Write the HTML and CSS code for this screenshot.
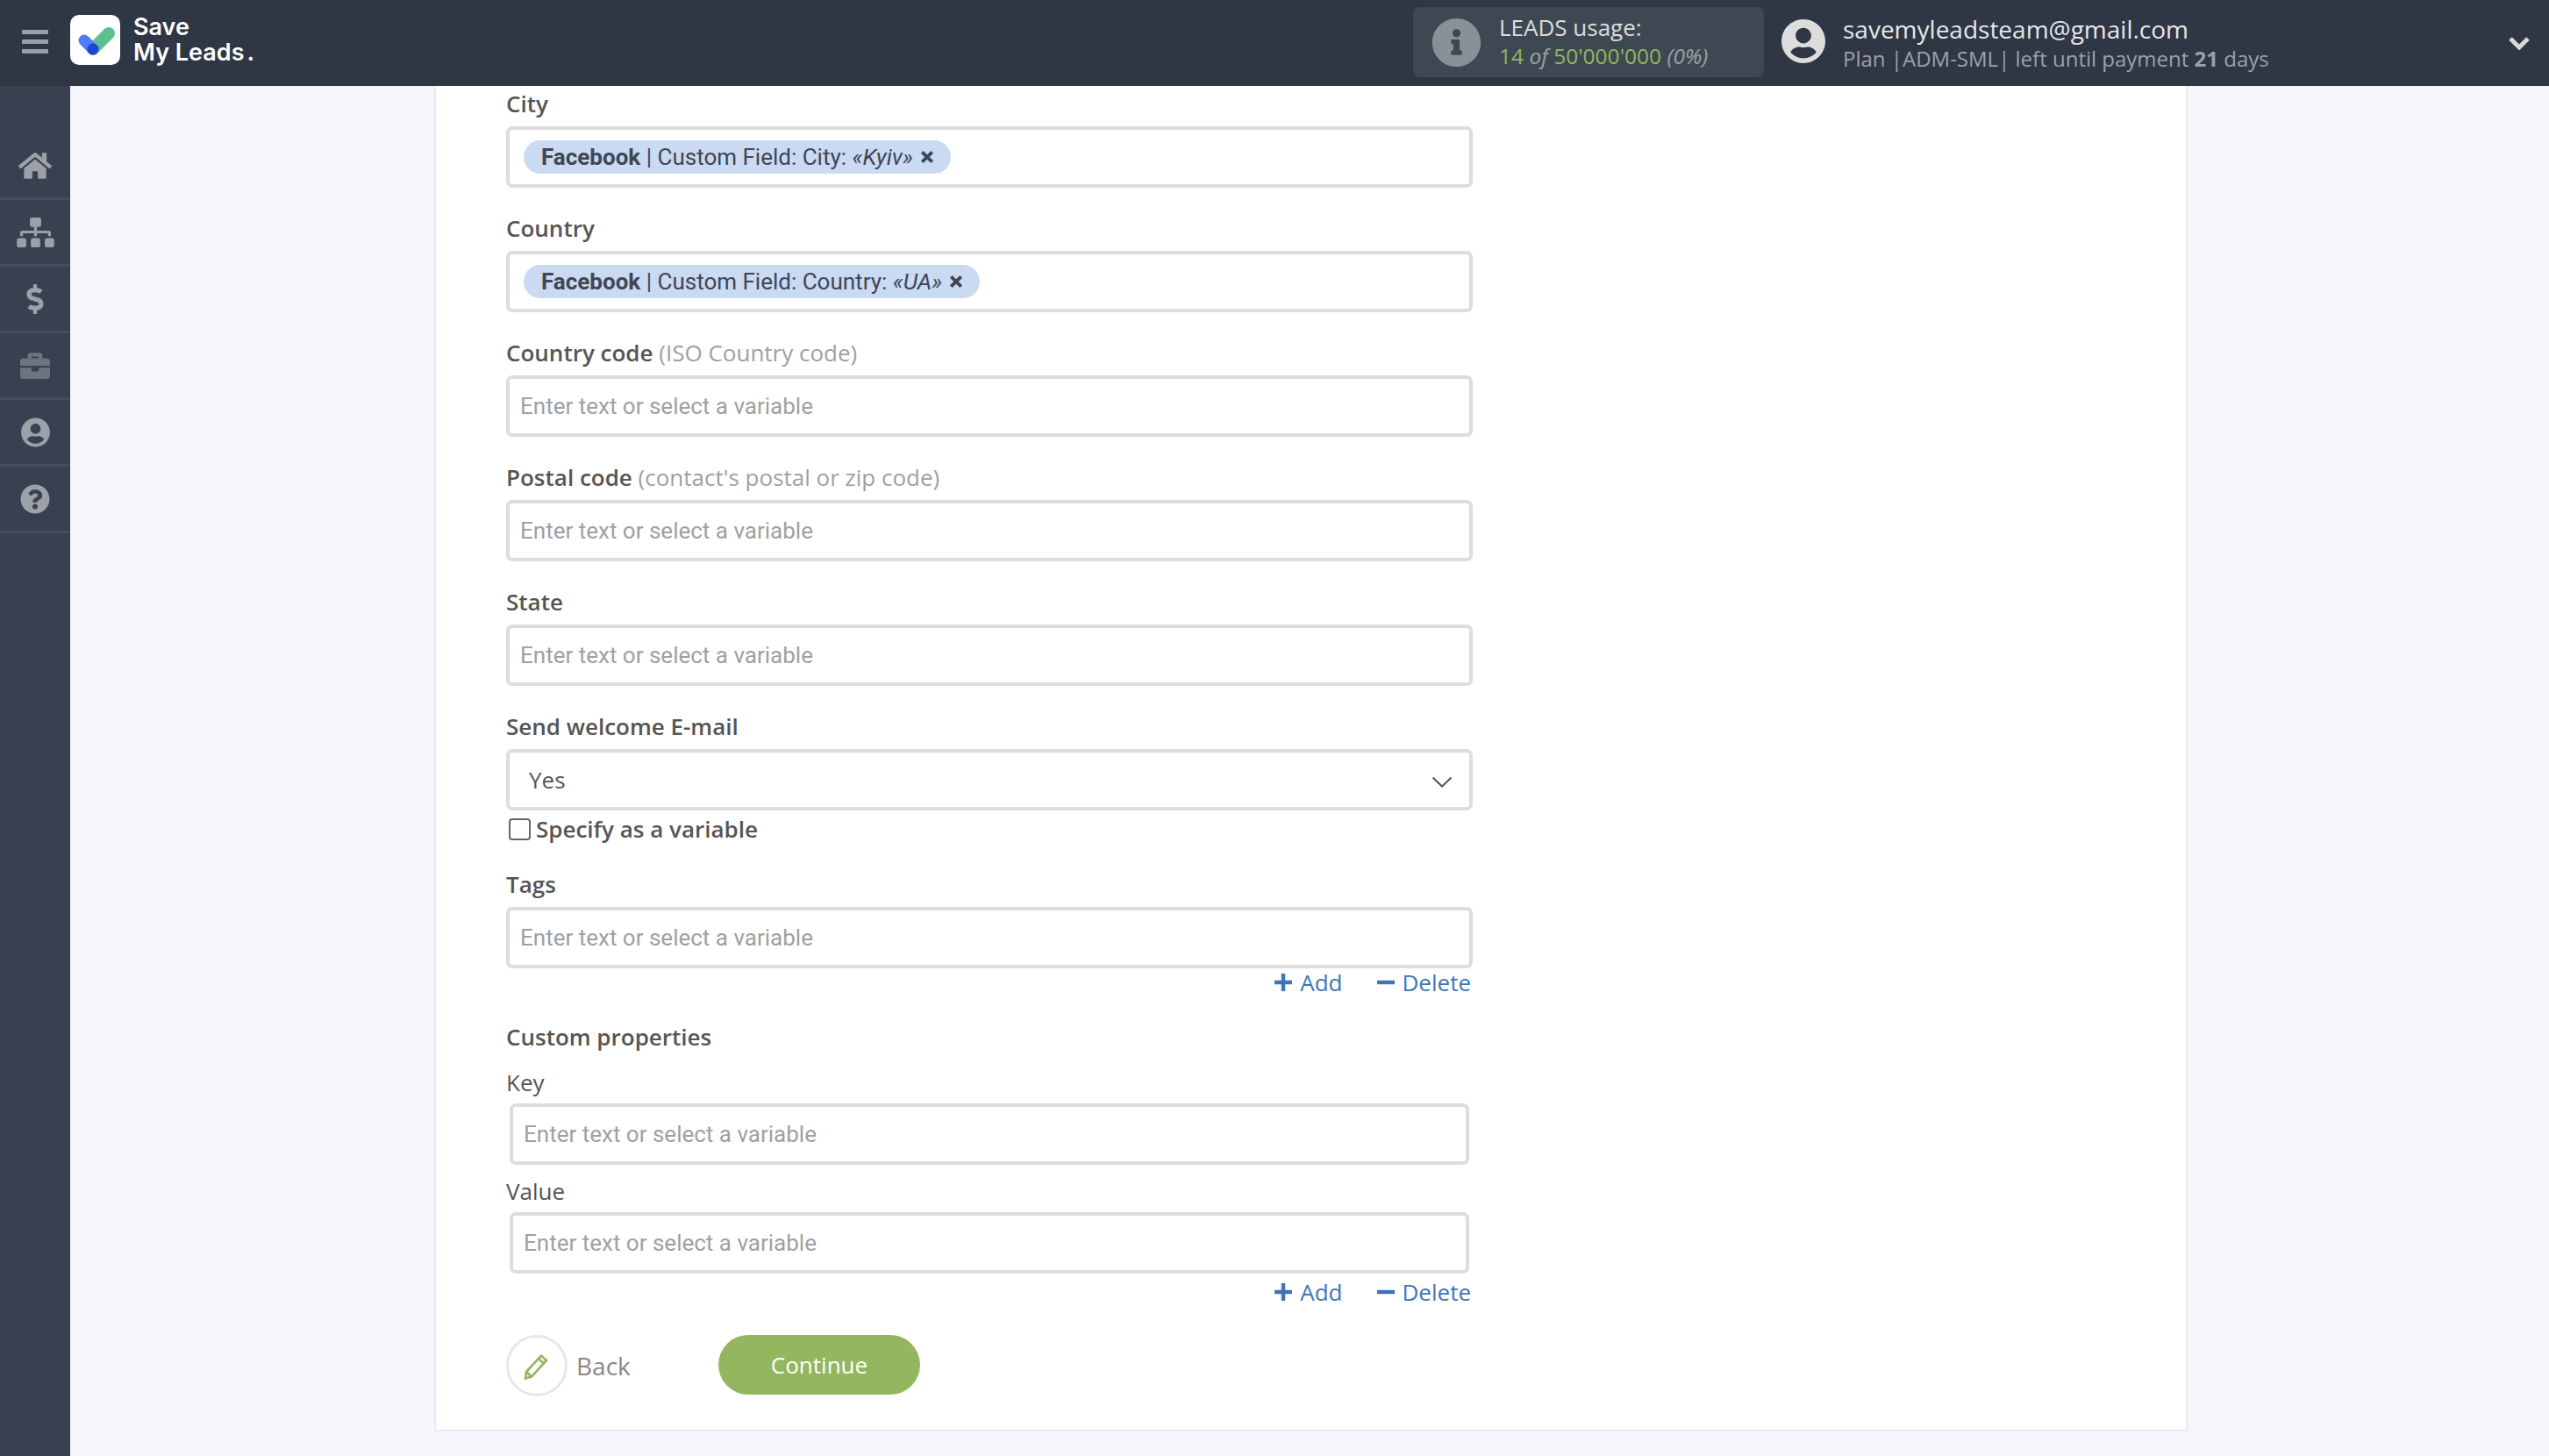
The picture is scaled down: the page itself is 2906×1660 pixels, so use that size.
FILE: index.html
```html
<!DOCTYPE html>
<html lang="en">
<head>
    <meta charset="UTF-8">
    <meta name="viewport" content="width=device-width, initial-scale=1.0">
    <title>Save My Leads</title>
    <link rel="stylesheet" href="styles.css">
</head>
<body>
    <!-- Top bar -->
    <header class="topbar">
        <div class="burger"><span></span><span></span><span></span></div>
        <div class="logo-box">
            <svg viewBox="0 0 57 57" width="57" height="57">
                <line x1="44" y1="21" x2="26" y2="39" stroke="#5ec08f" stroke-width="14" stroke-linecap="round"/>
                <line x1="16" y1="29" x2="26" y2="39" stroke="#4f7cf7" stroke-width="13" stroke-linecap="round"/>
                <circle cx="26" cy="39" r="6.5" fill="#2541d4"/>
            </svg>
        </div>
        <div class="logo-text">Save<br>My Leads<span class="logo-dot">.</span></div>

        <div class="usage">
            <svg class="usage-icon" viewBox="0 0 512 512"><path d="M256 8C119.043 8 8 119.083 8 256c0 136.997 111.043 248 248 248s248-111.003 248-248C504 119.083 392.957 8 256 8zm0 110c23.196 0 42 18.804 42 42s-18.804 42-42 42-42-18.804-42-42 18.804-42 42-42zm56 254c0 6.627-5.373 12-12 12h-88c-6.627 0-12-5.373-12-12v-24c0-6.627 5.373-12 12-12h12v-64h-12c-6.627 0-12-5.373-12-12v-24c0-6.627 5.373-12 12-12h64c6.627 0 12 5.373 12 12v100h12c6.627 0 12 5.373 12 12v24z"/></svg>
            <div class="usage-text">
                <div class="usage-title">LEADS usage:</div>
                <div class="usage-count"><span class="green">14</span> <i>of</i> <span class="green">50'000'000</span> <i>(0%)</i></div>
            </div>
        </div>

        <svg class="user-icon" viewBox="0 0 496 512"><path d="M248 8C111 8 0 119 0 256s111 248 248 248 248-111 248-248S385 8 248 8zm0 96c48.6 0 88 39.4 88 88s-39.4 88-88 88-88-39.4-88-88 39.4-88 88-88zm0 344c-58.7 0-111.3-26.6-146.5-68.2 18.8-35.4 55.6-59.8 98.5-59.8 2.4 0 4.8.4 7.1 1.1 13 4.2 26.6 6.9 40.9 6.9 14.3 0 28-2.7 40.9-6.9 2.3-.7 4.7-1.1 7.1-1.1 42.9 0 79.7 24.4 98.5 59.8C359.3 421.4 306.7 448 248 448z"/></svg>
        <div class="account">
            <div class="account-mail">savemyleadsteam@gmail.com</div>
            <div class="account-plan">Plan |ADM-SML| left until payment <b>21</b> days</div>
        </div>
        <svg class="account-arrow" viewBox="0 0 26 16"><path d="M3 3l10 10L23 3" fill="none" stroke="#d8d9db" stroke-width="5"/></svg>
    </header>

    <div class="layout">
        <!-- Left menu -->
        <nav class="sidebar">
            <a class="side-item"><svg width="38" height="34" viewBox="0 0 576 512"><path d="M280.37 148.26L96 300.11V464a16 16 0 0 0 16 16l112.06-.29a16 16 0 0 0 15.92-16V368a16 16 0 0 1 16-16h64a16 16 0 0 1 16 16v95.64a16 16 0 0 0 16 16.05L464 480a16 16 0 0 0 16-16V300L295.67 148.26a12.19 12.19 0 0 0-15.3 0zM571.6 251.47L488 182.56V44.05a12 12 0 0 0-12-12h-56a12 12 0 0 0-12 12v72.61L318.47 43a48 48 0 0 0-61 0L4.34 251.47a12 12 0 0 0-1.6 16.9l25.5 31A12 12 0 0 0 45.15 301l235.22-193.74a12.19 12.19 0 0 1 15.3 0L530.9 301a12 12 0 0 0 16.9-1.6l25.5-31a12 12 0 0 0-1.7-16.93z"/></svg></a>
            <a class="side-item"><svg width="43" height="34" viewBox="0 0 640 512"><path d="M128 352H32c-17.67 0-32 14.33-32 32v96c0 17.67 14.33 32 32 32h96c17.67 0 32-14.33 32-32v-96c0-17.67-14.33-32-32-32zm-24-80h192v48h48v-48h192v48h48v-57.59c0-21.17-17.23-38.41-38.41-38.41H344v-64h40c17.67 0 32-14.33 32-32V32c0-17.67-14.33-32-32-32H256c-17.67 0-32 14.33-32 32v96c0 17.67 14.33 32 32 32h40v64H94.41C73.23 224 56 241.23 56 262.41V320h48v-48zm264 80h-96c-17.67 0-32 14.33-32 32v96c0 17.67 14.33 32 32 32h96c17.67 0 32-14.33 32-32v-96c0-17.67-14.33-32-32-32zm240 0h-96c-17.67 0-32 14.33-32 32v96c0 17.67 14.33 32 32 32h96c17.67 0 32-14.33 32-32v-96c0-17.67-14.33-32-32-32z"/></svg></a>
            <a class="side-item"><svg width="20" height="34" viewBox="0 0 288 512"><path d="M209.2 233.4l-108-31.6C88.7 198.2 80 186.5 80 173.5c0-16.3 13.2-29.5 29.5-29.5h66.3c12.2 0 24.2 3.7 34.2 10.5 6.1 4.1 14.3 3.1 19.5-2l34.8-34c7.1-6.9 6.1-18.4-1.8-24.5C238 74.8 207.4 64.1 176 64V16c0-8.8-7.2-16-16-16h-32c-8.8 0-16 7.2-16 16v48h-2.5C45.8 64-5.4 118.7.5 183.6c4.2 46.1 39.4 83.6 83.8 96.6l102.5 30c12.5 3.7 21.2 15.3 21.2 28.3 0 16.3-13.2 29.5-29.5 29.5h-66.3C100 368 88 364.3 78 357.5c-6.1-4.1-14.3-3.1-19.5 2l-34.8 34c-7.1 6.9-6.1 18.4 1.8 24.5 24.5 19.2 55.1 29.9 86.5 30v48c0 8.8 7.2 16 16 16h32c8.8 0 16-7.2 16-16v-48.2c46.6-.9 90.3-28.6 105.7-72.7 21.5-61.6-14.6-124.8-72.5-141.7z"/></svg></a>
            <a class="side-item dim"><svg width="34" height="34" viewBox="0 0 512 512"><path d="M320 336c0 8.84-7.16 16-16 16h-96c-8.84 0-16-7.16-16-16v-48H0v144c0 25.6 22.4 48 48 48h416c25.6 0 48-22.4 48-48V288H320v48zm144-208h-80V80c0-25.6-22.4-48-48-48H176c-25.6 0-48 22.4-48 48v48H48c-25.6 0-48 22.4-48 48v80h512v-80c0-25.6-22.4-48-48-48zm-144 0H192V96h128v32z"/></svg></a>
            <a class="side-item"><svg width="33" height="34" viewBox="0 0 496 512"><path d="M248 8C111 8 0 119 0 256s111 248 248 248 248-111 248-248S385 8 248 8zm0 96c48.6 0 88 39.4 88 88s-39.4 88-88 88-88-39.4-88-88 39.4-88 88-88zm0 344c-58.7 0-111.3-26.6-146.5-68.2 18.8-35.4 55.6-59.8 98.5-59.8 2.4 0 4.8.4 7.1 1.1 13 4.2 26.6 6.9 40.9 6.9 14.3 0 28-2.7 40.9-6.9 2.3-.7 4.7-1.1 7.1-1.1 42.9 0 79.7 24.4 98.5 59.8C359.3 421.4 306.7 448 248 448z"/></svg></a>
            <a class="side-item"><svg width="34" height="34" viewBox="0 0 512 512"><path d="M504 256c0 136.997-111.043 248-248 248S8 392.997 8 256C8 119.083 119.043 8 256 8s248 111.083 248 248zM262.655 90c-54.497 0-89.255 22.957-116.549 63.758-3.536 5.286-2.353 12.415 2.715 16.258l34.699 26.31c5.205 3.947 12.621 3.008 16.665-2.122 17.864-22.658 30.113-35.797 57.303-35.797 20.429 0 45.698 13.148 45.698 32.958 0 14.976-12.363 22.667-32.534 33.976C247.128 238.528 216 254.941 216 296v4c0 6.627 5.373 12 12 12h56c6.627 0 12-5.373 12-12v-1.333c0-28.462 83.186-29.647 83.186-106.667 0-58.002-60.165-102-116.531-102zM256 338c-25.365 0-46 20.635-46 46 0 25.364 20.635 46 46 46s46-20.636 46-46c0-25.365-20.635-46-46-46z"/></svg></a>
        </nav>

        <main class="content">
            <div class="card">
                <div class="form">
                    <div class="field">
                        <label class="field-label">City</label>
                        <div class="input">
                            <span class="chip"><span><b>Facebook</b> | Custom Field: City: <i>«Kyiv»</i></span><svg class="chip-x" viewBox="0 0 14 14"><path d="M2 2l10 10M12 2L2 12" stroke="#3f4654" stroke-width="3.4"/></svg></span>
                        </div>
                    </div>
                    <div class="field">
                        <label class="field-label">Country</label>
                        <div class="input">
                            <span class="chip"><span><b>Facebook</b> | Custom Field: Country: <i>«UA»</i></span><svg class="chip-x" viewBox="0 0 14 14"><path d="M2 2l10 10M12 2L2 12" stroke="#3f4654" stroke-width="3.4"/></svg></span>
                        </div>
                    </div>
                    <div class="field">
                        <label class="field-label">Country code <span class="hint">(ISO Country code)</span></label>
                        <div class="input placeholder">Enter text or select a variable</div>
                    </div>
                    <div class="field">
                        <label class="field-label">Postal code <span class="hint">(contact's postal or zip code)</span></label>
                        <div class="input placeholder">Enter text or select a variable</div>
                    </div>
                    <div class="field">
                        <label class="field-label">State</label>
                        <div class="input placeholder">Enter text or select a variable</div>
                    </div>
                    <div class="field field-select">
                        <label class="field-label">Send welcome E-mail</label>
                        <div class="input select">
                            <span>Yes</span>
                            <svg class="select-arrow" viewBox="0 0 24 13"><path d="M1.5 1.5L12 11.5 22.5 1.5" fill="none" stroke="#555" stroke-width="2"/></svg>
                        </div>
                        <div class="check-row"><span class="checkbox"></span>Specify as a variable</div>
                    </div>
                    <div class="field-tight">
                        <label class="field-label">Tags</label>
                        <div class="input placeholder">Enter text or select a variable</div>
                    </div>
                    <div class="actions">
                        <a class="action"><svg viewBox="0 0 18 18"><path d="M9 0v18M0 9h18" stroke="#3f74b5" stroke-width="4"/></svg>Add</a>
                        <a class="action"><svg viewBox="0 0 18 18"><path d="M0 9h18" stroke="#3f74b5" stroke-width="4"/></svg>Delete</a>
                    </div>

                    <div class="group-title field-label">Custom properties</div>
                    <div class="sub-field">
                        <label class="sub-label">Key</label>
                        <div class="input placeholder">Enter text or select a variable</div>
                    </div>
                    <div class="sub-field">
                        <label class="sub-label">Value</label>
                        <div class="input placeholder">Enter text or select a variable</div>
                    </div>
                    <div class="actions actions-last">
                        <a class="action"><svg viewBox="0 0 18 18"><path d="M9 0v18M0 9h18" stroke="#3f74b5" stroke-width="4"/></svg>Add</a>
                        <a class="action"><svg viewBox="0 0 18 18"><path d="M0 9h18" stroke="#3f74b5" stroke-width="4"/></svg>Delete</a>
                    </div>

                    <div class="buttons">
                        <a class="back">
                            <span class="back-circle">
                                <svg viewBox="0 0 30 32" width="30" height="32"><path d="M3 23L20 4.5l6 5.5L9 28.5l-7 2zM17 8l6 5.5M3 23l6 5.5" fill="none" stroke="#93b75f" stroke-width="2.6"/></svg>
                            </span>
                            Back
                        </a>
                        <button class="continue">Continue</button>
                    </div>
                </div>
            </div>
        </main>
    </div>
</body>
</html>
```

FILE: styles.css
```css
/* General */
* {
    box-sizing: border-box;
}

html, body {
    height: 100%;
}

body {
    margin: 0;
    overflow: hidden;
    background-color: #f5f7fc;
    color: #555;
    font-family: "Open Sans", sans-serif;
    font-size: 26px;
}

/* Top bar */
.topbar {
    display: flex;
    align-items: center;
    height: 98px;
    background-color: #2f3644;
}

.burger {
    display: flex;
    flex-direction: column;
    gap: 6px;
    width: 30px;
    margin-top: -3px;
    margin-left: 25px;
}

.burger span {
    height: 5px;
    border-radius: 1px;
    background-color: #9a9fa6;
}

.logo-box {
    width: 57px;
    height: 57px;
    margin-top: -8px;
    margin-left: 25px;
    border-radius: 10px;
    background-color: #fff;
}

.logo-text {
    margin-top: -8px;
    margin-left: 15px;
    color: #fff;
    font-family: Inter, sans-serif;
    font-size: 27px;
    font-weight: 600;
    line-height: 29px;
}

.logo-dot {
    margin-left: 3px;
}

.usage {
    display: flex;
    align-items: center;
    width: 400px;
    height: 80px;
    margin-top: -2px;
    margin-left: auto;
    padding-left: 21px;
    border-radius: 8px;
    background-color: #3e4852;
}

.usage-icon {
    width: 57px;
    height: 57px;
    margin-right: 20px;
    fill: #8a9097;
}

.usage-text {
    margin-top: -3px;
}

.usage-title {
    color: #ddd;
    line-height: 34px;
}

.usage-count {
    color: #9ca1a9;
    font-size: 24.5px;
    line-height: 32px;
}

.green {
    color: #8fb85a;
}

.user-icon {
    width: 50px;
    height: 52px;
    margin-top: -4px;
    margin-left: 20px;
    fill: #ddd;
}

.account {
    width: 758px;
    margin-left: 20px;
}

.account-mail {
    color: #e6e7e9;
    font-size: 28px;
    line-height: 36px;
}

.account-plan {
    color: #9ca1a9;
    font-size: 24px;
    line-height: 32px;
}

.account-arrow {
    width: 26px;
    height: 16px;
    margin-right: 21px;
}

/* Layout */
.layout {
    display: flex;
    height: 1562px;
}

.sidebar {
    flex: none;
    width: 80px;
    padding-top: 54px;
    background-color: #384150;
}

.side-item {
    display: flex;
    align-items: center;
    justify-content: center;
    height: 76px;
    border-bottom: 3px solid #454e5c;
    fill: #9ca1a9;
}

.side-item.dim {
    fill: #6d7480;
}

.content {
    flex: 1;
    padding-left: 415px;
    padding-right: 412px;
}

/* Card */
.card {
    height: 1534px;
    padding-left: 80px;
    border: 2px solid #e8ebf0;
    border-top: none;
    background-color: #fff;
}

.form {
    width: 1102px;
}

.field {
    margin-bottom: 26px;
}

.field-label {
    display: block;
    height: 40px;
    margin-bottom: 6px;
    color: #555;
    font-weight: 600;
    line-height: 40px;
}

.hint {
    color: #a0a0a0;
    font-weight: 400;
}

/* Inputs */
.input {
    display: flex;
    align-items: center;
    height: 70px;
    padding-left: 16px;
    border: 4px solid #ddd;
    border-radius: 7px;
    background-color: #fff;
}

.placeholder {
    padding-left: 12px;
    color: #a0a0a0;
    font-family: Roboto, sans-serif;
    font-size: 26px;
}

.chip {
    display: flex;
    align-items: center;
    gap: 8px;
    height: 38px;
    padding: 0 19px 0 20px;
    border-radius: 19px;
    background-color: #c9daf2;
    color: #3f4654;
    font-family: Roboto, sans-serif;
    font-size: 26px;
}

.chip-x {
    width: 16px;
    height: 16px;
}

.select {
    justify-content: space-between;
    padding: 0 19px 0 22px;
    color: #555;
}

.select-arrow {
    width: 24px;
    height: 13px;
    margin-top: 4px;
}

.field-select {
    margin-bottom: 26px;
}

.check-row {
    display: flex;
    align-items: center;
    gap: 6px;
    height: 34px;
    margin-top: 4px;
    padding-left: 3px;
    font-weight: 600;
}

.checkbox {
    width: 25px;
    height: 25px;
    border: 2px solid #666;
    border-radius: 4px;
}

/* Add / Delete links */
.actions {
    display: flex;
    justify-content: flex-end;
    gap: 39px;
    height: 32px;
    margin-bottom: 26px;
    padding-right: 2px;
}

.actions-last {
    margin-top: -5px;
    margin-bottom: 33px;
}

.action {
    display: flex;
    align-items: center;
    gap: 9px;
    color: #3f74b5;
    font-size: 26px;
}

.action svg {
    width: 20px;
    height: 20px;
}

/* Custom properties */
.group-title {
    margin-bottom: 12px;
}

.sub-field {
    margin: 0 4px 10px;
}

.sub-label {
    display: block;
    height: 40px;
    margin-bottom: 4px;
    margin-left: -4px;
    line-height: 40px;
}

/* Buttons */
.buttons {
    display: flex;
    align-items: flex-start;
}

.back {
    display: flex;
    align-items: center;
    gap: 10px;
    width: 242px;
    color: #888;
    font-size: 28px;
}

.back-circle {
    display: flex;
    align-items: center;
    justify-content: center;
    width: 70px;
    height: 70px;
    border: 3px solid #e2eae8;
    border-radius: 50%;
}

.continue {
    width: 230px;
    height: 68px;
    border: none;
    border-radius: 34px;
    background-color: #93b75f;
    color: #fff;
    font-family: "Open Sans", sans-serif;
    font-size: 26px;
}
```
